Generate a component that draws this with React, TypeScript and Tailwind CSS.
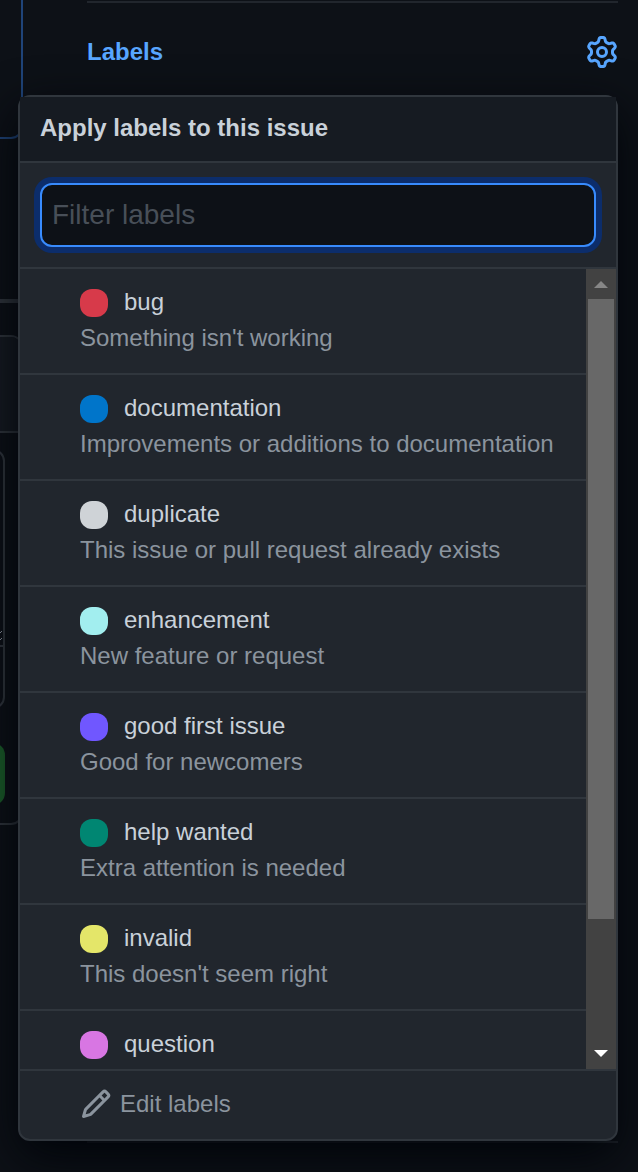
import React, { useState } from "react";

type Label = { name: string; description?: string; swatch: string };

const labels: Label[] = [
  { name: "bug", description: "Something isn't working", swatch: "bg-[#d73a4a]" },
  { name: "documentation", description: "Improvements or additions to documentation", swatch: "bg-[#0075ca]" },
  { name: "duplicate", description: "This issue or pull request already exists", swatch: "bg-[#cfd3d7]" },
  { name: "enhancement", description: "New feature or request", swatch: "bg-[#a2eeef]" },
  { name: "good first issue", description: "Good for newcomers", swatch: "bg-[#7057ff]" },
  { name: "help wanted", description: "Extra attention is needed", swatch: "bg-[#008672]" },
  { name: "invalid", description: "This doesn't seem right", swatch: "bg-[#e4e669]" },
  { name: "question", swatch: "bg-[#d876e3]" },
];

function GearIcon() {
  return (
    <svg viewBox="0 0 16 16" className="size-8 fill-current" aria-hidden="true">
      <path
        fillRule="evenodd"
        d="M7.429 1.525a6.593 6.593 0 011.142 0c.036.003.108.036.137.146l.289 1.105c.147.56.55.967.997 1.189.174.086.341.183.501.29.417.278.97.423 1.53.27l1.102-.303c.11-.03.175.016.195.046.219.31.41.641.573.989.014.031.022.11-.059.19l-.815.806c-.411.406-.562.957-.53 1.456a4.588 4.588 0 010 .582c-.032.499.119 1.05.53 1.456l.815.806c.08.08.073.159.059.19a6.494 6.494 0 01-.573.99c-.02.029-.086.074-.195.045l-1.103-.303c-.559-.153-1.112-.008-1.529.27-.16.107-.327.204-.5.29-.449.222-.851.628-.998 1.189l-.289 1.105c-.029.11-.101.143-.137.146a6.613 6.613 0 01-1.142 0c-.036-.003-.108-.037-.137-.146l-.289-1.105c-.147-.56-.55-.967-.997-1.189a4.502 4.502 0 01-.501-.29c-.417-.278-.97-.423-1.53-.27l-1.102.303c-.11.03-.175-.016-.195-.046a6.492 6.492 0 01-.573-.989c-.014-.031-.022-.11.059-.19l.815-.806c.411-.406.562-.957.53-1.456a4.587 4.587 0 010-.582c.032-.499-.119-1.05-.53-1.456l-.815-.806c-.08-.08-.073-.159-.059-.19a6.44 6.44 0 01.573-.99c.02-.029.086-.075.195-.045l1.103.303c.559.153 1.112.008 1.529-.27.16-.107.327-.204.5-.29.449-.222.851-.628.998-1.189l.289-1.105c.029-.11.101-.143.137-.146zM8 0c-.236 0-.47.01-.701.03-.743.065-1.29.615-1.458 1.261l-.29 1.106c-.017.066-.078.158-.211.224a5.994 5.994 0 00-.668.386c-.123.082-.233.09-.3.071L3.27 2.776c-.644-.177-1.392.02-1.82.63a7.977 7.977 0 00-.704 1.217c-.315.675-.111 1.422.363 1.891l.815.806c.05.048.098.147.088.294a6.084 6.084 0 000 .772c.01.147-.038.246-.088.294l-.815.806c-.474.469-.678 1.216-.363 1.891.2.428.436.835.704 1.218.428.609 1.176.806 1.82.63l1.103-.303c.066-.019.176-.011.299.071.213.143.436.272.668.386.133.066.194.158.212.224l.289 1.106c.169.646.715 1.196 1.458 1.26a8.094 8.094 0 001.402 0c.743-.064 1.29-.614 1.458-1.26l.29-1.106c.017-.066.078-.158.211-.224a5.98 5.98 0 00.668-.386c.123-.082.233-.09.3-.071l1.102.302c.644.177 1.392-.02 1.82-.63.268-.382.505-.789.704-1.217.315-.675.111-1.422-.364-1.891l-.814-.806c-.05-.048-.098-.147-.088-.294a6.1 6.1 0 000-.772c-.01-.147.039-.246.088-.294l.814-.806c.475-.469.679-1.216.364-1.891a7.992 7.992 0 00-.704-1.218c-.428-.609-1.176-.806-1.82-.63l-1.103.303c-.066.019-.176.011-.299-.071a5.991 5.991 0 00-.668-.386c-.133-.066-.194-.158-.212-.224L10.16 1.29C9.99.645 9.444.095 8.701.031A8.094 8.094 0 008 0zm1.5 8a1.5 1.5 0 11-3 0 1.5 1.5 0 013 0zM11 8a3 3 0 11-6 0 3 3 0 016 0z"
      />
    </svg>
  );
}

function PencilIcon() {
  return (
    <svg viewBox="0 0 16 16" className="size-8 fill-current" aria-hidden="true">
      <path
        fillRule="evenodd"
        d="M11.013 1.427a1.75 1.75 0 012.474 0l1.086 1.086a1.75 1.75 0 010 2.474l-8.61 8.61c-.21.21-.47.364-.756.445l-3.251.93a.75.75 0 01-.927-.928l.929-3.25a1.75 1.75 0 01.445-.758l8.61-8.61zm1.414 1.06a.25.25 0 00-.354 0L10.811 3.75l1.439 1.44 1.263-1.263a.25.25 0 000-.354l-1.086-1.086zM11.189 6.25L9.75 4.81l-6.286 6.287a.25.25 0 00-.064.108l-.558 1.953 1.953-.558a.249.249 0 00.108-.064l6.286-6.286z"
      />
    </svg>
  );
}

function Arrow({ up }: { up?: boolean }) {
  return (
    <svg viewBox="0 0 14 7" className={up ? "h-[7px] w-[14px] fill-[#868686]" : "h-[7px] w-[14px] fill-white"} aria-hidden="true">
      <path d={up ? "M0 7 7 0l7 7z" : "M0 0h14L7 7z"} />
    </svg>
  );
}

function Timeline() {
  return (
    <div className="w-[23px] shrink-0">
      <div className="h-[139px] rounded-br-xl border-r-2 border-b-2 border-[#1f4479]" />
      <div className="mt-40 h-1 bg-[#30363d]" />
      <div className="mt-8 h-[490px] overflow-hidden rounded-r-xl border-y-2 border-r-2 border-[#30363d]">
        <div className="h-[94px] bg-[#161b22]" />
        <div className="h-[2px] bg-[#30363d]" />
        <div className="mt-4 -ml-5 flex h-[260px] w-[25px] flex-col rounded-xl border-2 border-[#30363d]">
          <div className="flex grow flex-col items-end justify-end pb-1">
            <svg viewBox="0 0 3 10" className="h-[10px] w-[3px] fill-[#8b949e]" aria-hidden="true">
              <path d="M1 0h1v1H1zM0 1h1v1H0zM1 7h1v1H1zM0 8h1v1H0z" />
            </svg>
          </div>
          <div className="h-[62px] border-t-2 border-[#30363d]" />
        </div>
        <div className="mt-[34px] -ml-5 h-[62px] w-[25px] rounded-xl bg-[#1b5e2a]" />
      </div>
    </div>
  );
}

function LabelRow({ label }: { label: Label }) {
  return (
    <li className="border-b-2 border-[#30363d] last:border-b-0">
      <button type="button" className="block w-full pt-[15px] pb-[17px] pl-15 text-left leading-9">
        <span className="flex items-center gap-4 text-[#c9d1d9]">
          <span className={`mt-0.5 size-7 shrink-0 rounded-xl ${label.swatch}`} />
          {label.name}
        </span>
        {label.description && <span className="block truncate text-[#8b949e]">{label.description}</span>}
      </button>
    </li>
  );
}

function LabelMenu() {
  const [query, setQuery] = useState("");
  const shown = labels.filter((l) => l.name.includes(query.toLowerCase()));
  return (
    <div
      role="dialog"
      aria-labelledby="menu-title"
      className="absolute top-[95px] right-5 left-[18px] rounded-xl border-2 border-[#30363d] bg-[#21262d] shadow-[0_16px_48px_#010409]"
    >
      <h2 id="menu-title" className="border-b-2 border-[#30363d] bg-[#161b22] px-5 pt-[13px] pb-[15px] leading-9 font-bold text-[#c9d1d9]">
        Apply labels to this issue
      </h2>
      <div className="border-b-2 border-[#30363d] p-5">
        <input
          type="text"
          aria-label="Filter labels"
          placeholder="Filter labels"
          value={query}
          onChange={(e) => setQuery(e.target.value)}
          className="block h-16 w-full rounded-xl border-2 border-[#388bfd] bg-[#0d1117] px-2.5 text-[28px] text-[#c9d1d9] ring-6 ring-[#0c2d6b] outline-none placeholder:text-[#484f58]"
        />
      </div>
      <div className="flex h-[800px]">
        <ul className="min-w-0 grow overflow-y-auto [scrollbar-width:none]">
          {shown.map((l) => (
            <LabelRow key={l.name} label={l} />
          ))}
        </ul>
        <div className="flex w-[30px] shrink-0 flex-col items-center bg-[#424242]" aria-hidden="true">
          <div className="flex h-[30px] items-center">
            <Arrow up />
          </div>
          <div className="w-full grow px-0.5">
            <div className="h-[84%] bg-[#686868]" />
          </div>
          <div className="flex h-8 items-center">
            <Arrow />
          </div>
        </div>
      </div>
      <a href="#labels" className="flex items-center gap-2 border-t-2 border-[#30363d] pt-[15px] pb-[17px] pl-15 leading-9 text-[#8b949e]">
        <PencilIcon />
        Edit labels
      </a>
    </div>
  );
}

export default function App() {
  return (
    <div className="relative flex min-h-screen overflow-hidden bg-[#0d1117] pr-5 font-['Liberation_Sans',Arial,sans-serif] text-2xl">
      <Timeline />
      <aside className="mt-px mb-[29px] ml-16 grow border-y-2 border-[#21262d]">
        <button type="button" className="flex w-full items-center justify-between pt-[31px] leading-9 font-bold text-[#58a6ff]">
          Labels
          <GearIcon />
        </button>
      </aside>
      <LabelMenu />
    </div>
  );
}
